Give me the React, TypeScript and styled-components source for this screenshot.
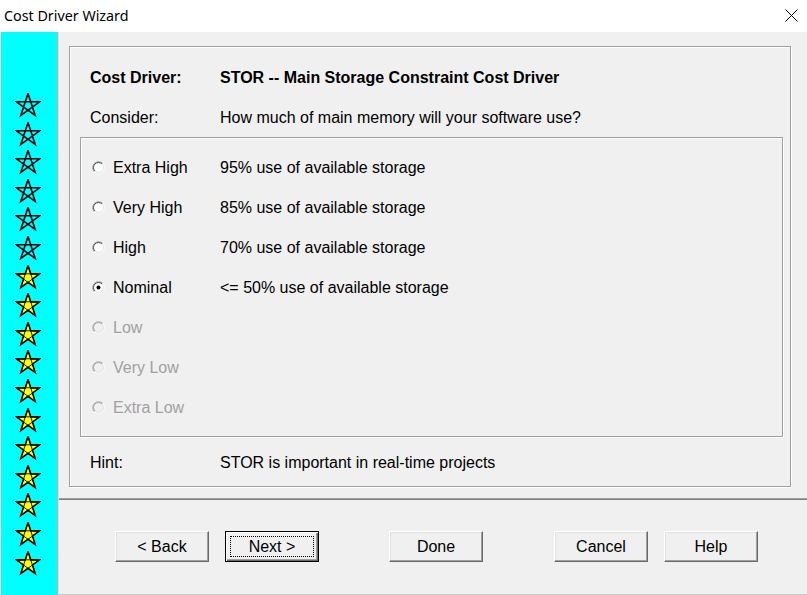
import React from "react";
import styled, { createGlobalStyle, css } from "styled-components";

const GlobalStyle = createGlobalStyle`
  html, body { margin: 0; padding: 0; background: #ffffff; overflow: hidden; }
  * { box-sizing: border-box; }
`;

const Window = styled.div`
  width: 807px;
  height: 595px;
  display: flex;
  flex-direction: column;
  background: #ffffff;
  font-family: "Liberation Sans", Arial, sans-serif;
  font-size: 16px;
  color: #000;
`;

const TitleBar = styled.div`
  height: 32px;
  display: flex;
  align-items: center;
  justify-content: space-between;
  padding: 0 9px 1px 4px;
  background: #ffffff;
`;

const Title = styled.span`
  font-family: "Noto Sans", "Open Sans", sans-serif;
  font-size: 14.3px;
  color: #000;
`;

const CloseButton = styled.span`
  display: flex;
  width: 14px;
  height: 14px;
  align-items: center;
  justify-content: center;
  margin-top: -1px;
`;

const Body = styled.div`
  flex: 1;
  display: flex;
  padding-left: 1px;
  background: #ffffff;
`;

const StarRail = styled.div`
  width: 57px;
  background: #00ffff;
  border-right: 1px solid #b4b4b4;
  display: flex;
  flex-direction: column;
  padding: 61px 0 0 14px;
`;

const StarCell = styled.div`
  height: 28.6px;
  flex: none;
  display: flex;
`;

const Main = styled.div`
  flex: 1;
  display: flex;
  flex-direction: column;
  background: #f0f0f0;
  border-left: 1px solid #dcdcdc;
`;

const Content = styled.div`
  padding: 14px 16px 11px 10px;
`;

const etched = css`
  border: 1px solid #a0a0a0;
  box-shadow: 1px 1px 0 #ffffff, inset 1px 1px 0 #ffffff;
`;

const OuterFrame = styled.div`
  ${etched};
  height: 441px;
  padding: 10px 0 4px 0;
  display: flex;
  flex-direction: column;
`;

const InfoRow = styled.div<{ $gapTop?: number }>`
  height: 40px;
  display: grid;
  grid-template-columns: 130px 1fr;
  align-items: center;
  padding: 2px 0 0 20px;
  margin-top: ${(p) => p.$gapTop ?? 0}px;
`;

const InfoText = styled.span<{ $bold?: boolean }>`
  font-weight: ${(p) => (p.$bold ? 700 : 400)};
  white-space: nowrap;
`;

const OptionsFrame = styled.div`
  ${etched};
  margin: 0 7px 0 10px;
  height: 300px;
  padding: 9px 0 9px 11px;
  display: flex;
  flex-direction: column;
`;

const OptionRow = styled.div`
  height: 40px;
  display: grid;
  grid-template-columns: 13px 99px 1fr;
  column-gap: 8px;
  align-items: center;
  padding-top: 2px;
`;

const OptionLabel = styled.span<{ $disabled?: boolean }>`
  color: ${(p) => (p.$disabled ? "#a0a0a0" : "#000")};
  white-space: nowrap;
`;

const RadioBox = styled.span`
  display: flex;
  width: 13px;
  height: 13px;
  margin-top: -2px;
`;

const Separator = styled.div`
  height: 2px;
  border-top: 1px solid #a0a0a0;
  border-bottom: 1px solid #808080;
`;

const ButtonBar = styled.div`
  flex: 1;
  display: flex;
  align-items: flex-start;
  gap: 70px;
  padding: 31px 0 0 56px;
  border-bottom: 1px solid #c8c8c8;
`;

const ButtonGroup = styled.div<{ $shift?: number }>`
  display: flex;
  gap: 16px;
  margin-left: ${(p) => p.$shift ?? 0}px;
`;

const Button = styled.button<{ $default?: boolean }>`
  position: relative;
  width: 94px;
  height: 31px;
  padding: 1px 0 0 0;
  font-family: "Liberation Sans", Arial, sans-serif;
  font-size: 16px;
  color: #000;
  background: #f0f0f0;
  border: 1px solid;
  border-color: #ffffff #696969 #696969 #ffffff;
  box-shadow: inset -1px -1px 0 #a0a0a0, inset 1px 1px 0 #e3e3e3;
  cursor: default;
  ${(p) =>
    p.$default &&
    css`
      border: 1px solid #000;
      box-shadow: inset 1px 1px 0 #ffffff, inset -1px -1px 0 #696969,
        inset -2px -2px 0 #a0a0a0;
      &::after {
        content: "";
        position: absolute;
        left: 4px;
        right: 4px;
        top: 4px;
        bottom: 4px;
        border: 1px dotted #000;
      }
    `}
`;

const PENTAGRAM = "M13 0.6 L20.2 22.5 L1.3 8.8 L24.7 8.8 L5.8 22.5 Z";
const OUTLINE =
  "M13 0.6 L15.8 9.0 L24.7 8.8 L17.5 14.0 L20.2 22.5 L13 17.3 L5.8 22.5 L8.5 14.0 L1.3 8.8 L10.2 9.0 Z";

const Star: React.FC<{ filled: boolean }> = ({ filled }) => (
  <svg width="26" height="25" viewBox="0 0 26 25">
    {filled ? (
      <>
        <path d={OUTLINE} fill="#ffff00" stroke="#000" strokeWidth={1.5} strokeLinejoin="miter" />
        <path d={PENTAGRAM} fill="none" stroke="#000" strokeWidth={0.9} />
      </>
    ) : (
      <path d={PENTAGRAM} fill="none" stroke="#000" strokeWidth={1.6} strokeLinejoin="miter" />
    )}
  </svg>
);

const Radio: React.FC<{ checked?: boolean; disabled?: boolean }> = ({
  checked,
  disabled,
}) => (
  <RadioBox>
    <svg width="13" height="13" viewBox="0 0 13 13">
      <circle cx="6.5" cy="6.5" r="5" fill={disabled ? "#f0f0f0" : "#ffffff"} />
      <path
        d="M2.26 10.74 A6 6 0 0 1 10.74 2.26"
        fill="none"
        stroke={disabled ? "#b4b4b4" : "#a0a0a0"}
        strokeWidth="1"
      />
      <path
        d="M2.96 10.04 A5 5 0 0 1 10.04 2.96"
        fill="none"
        stroke={disabled ? "#a0a0a0" : "#505050"}
        strokeWidth="1"
      />
      <path
        d="M10.74 2.26 A6 6 0 0 1 2.26 10.74"
        fill="none"
        stroke="#ffffff"
        strokeWidth="1"
      />
      <path
        d="M10.04 2.96 A5 5 0 0 1 2.96 10.04"
        fill="none"
        stroke="#e3e3e3"
        strokeWidth="1"
      />
      {checked && <circle cx="6.5" cy="6.5" r="2" fill="#000" />}
    </svg>
  </RadioBox>
);

const options = [
  { label: "Extra High", desc: "95% use of available storage", enabled: true },
  { label: "Very High", desc: "85% use of available storage", enabled: true },
  { label: "High", desc: "70% use of available storage", enabled: true },
  { label: "Nominal", desc: "<= 50% use of available storage", enabled: true, checked: true },
  { label: "Low", desc: "", enabled: false },
  { label: "Very Low", desc: "", enabled: false },
  { label: "Extra Low", desc: "", enabled: false },
];

const stars = Array.from({ length: 17 }, (_, i) => i >= 6);

export default function App() {
  return (
    <>
      <GlobalStyle />
      <Window>
        <TitleBar>
          <Title>Cost Driver Wizard</Title>
          <CloseButton>
            <svg width="13" height="13" viewBox="0 0 13 13">
              <path d="M0.5 0.5 L12.5 12.5 M12.5 0.5 L0.5 12.5" stroke="#000" strokeWidth="1" />
            </svg>
          </CloseButton>
        </TitleBar>
        <Body>
          <StarRail>
            {stars.map((filled, i) => (
              <StarCell key={i}>
                <Star filled={filled} />
              </StarCell>
            ))}
          </StarRail>
          <Main>
            <Content>
              <OuterFrame>
                <InfoRow>
                  <InfoText $bold>Cost Driver:</InfoText>
                  <InfoText $bold>STOR -- Main Storage Constraint Cost Driver</InfoText>
                </InfoRow>
                <InfoRow>
                  <InfoText>Consider:</InfoText>
                  <InfoText>How much of main memory will your software use?</InfoText>
                </InfoRow>
                <OptionsFrame>
                  {options.map((o) => (
                    <OptionRow key={o.label}>
                      <Radio checked={o.checked} disabled={!o.enabled} />
                      <OptionLabel $disabled={!o.enabled}>{o.label}</OptionLabel>
                      <OptionLabel>{o.desc}</OptionLabel>
                    </OptionRow>
                  ))}
                </OptionsFrame>
                <InfoRow $gapTop={5}>
                  <InfoText>Hint:</InfoText>
                  <InfoText>STOR is important in real-time projects</InfoText>
                </InfoRow>
              </OuterFrame>
            </Content>
            <Separator />
            <ButtonBar>
              <ButtonGroup>
                <Button>&lt; Back</Button>
                <Button $default>Next &gt;</Button>
              </ButtonGroup>
              <ButtonGroup>
                <Button>Done</Button>
              </ButtonGroup>
              <ButtonGroup $shift={1}>
                <Button>Cancel</Button>
                <Button>Help</Button>
              </ButtonGroup>
            </ButtonBar>
          </Main>
        </Body>
      </Window>
    </>
  );
}
